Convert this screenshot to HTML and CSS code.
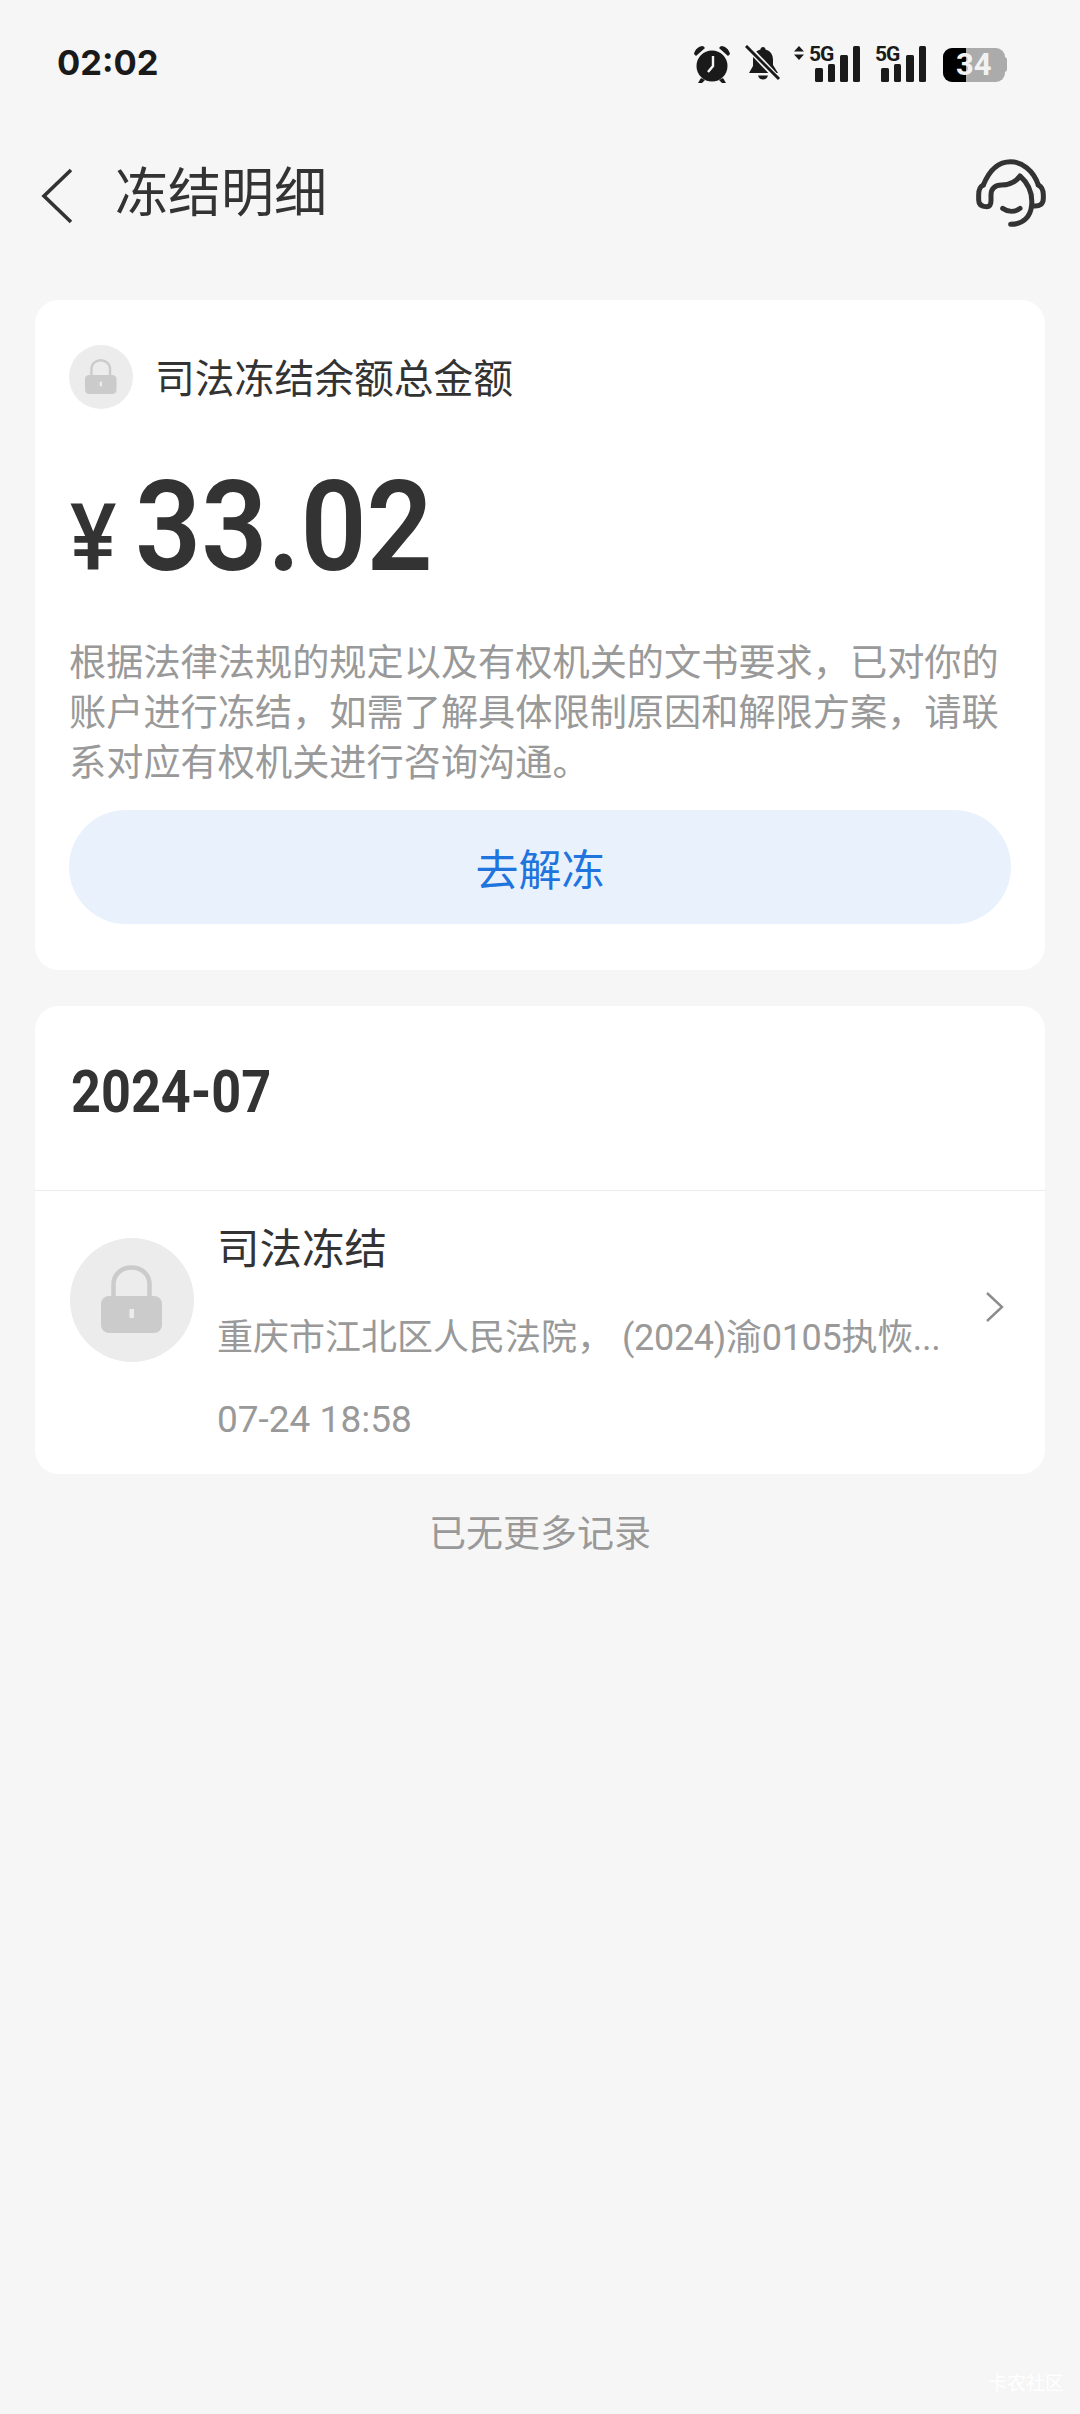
FILE: index.html
```html
<!DOCTYPE html>
<html lang="zh-CN">
<head>
    <meta charset="UTF-8">
    <meta name="viewport" content="width=device-width, initial-scale=1.0">
    <title>冻结明细</title>
    <link rel="stylesheet" href="styles.css">
</head>
<body>
    <svg class="defs" width="0" height="0">
        <symbol id="lock" viewBox="0 0 124 124">
            <path d="M43.5 60V46C43.5 36 52 29.5 61.5 29.5S79.5 36 79.5 46V60" fill="none" stroke="#cbcbcb" stroke-width="4.5"/>
            <rect x="31" y="58" width="61" height="37" rx="8" fill="#cbcbcb"/>
            <rect x="59.5" y="71" width="4.5" height="9" fill="#ececec"/>
        </symbol>
        <symbol id="signal" viewBox="0 0 45 36">
            <rect x="0" y="22" width="8" height="14" rx="1.5"/>
            <rect x="13" y="18" width="7" height="18" rx="1.5"/>
            <rect x="25" y="9" width="8" height="27" rx="1.5"/>
            <rect x="38" y="0" width="7" height="36" rx="1.5"/>
        </symbol>
    </svg>

    <div class="status-bar">
        <span class="clock">02:02</span>
        <div class="status-icons">
            <svg class="ic-alarm" width="38" height="38" viewBox="0 0 38 38">
                <circle cx="19" cy="21" r="15.5" fill="#1a1a1a"/>
                <path d="M1 9C2 4 6 1 10 1L12 3 3 11ZM37 9C36 4 32 1 28 1L26 3 35 11Z" fill="#1a1a1a"/>
                <path d="M8 33 5 38H9L12 35ZM30 33 33 38H29L26 35Z" fill="#1a1a1a"/>
                <path d="M20 11V21L15 27" fill="none" stroke="#f6f6f6" stroke-width="2.4"/>
            </svg>
            <svg class="ic-bell" width="36" height="36" viewBox="0 0 36 36">
                <path d="M18 2C19.500 2 20.500 3 20.500 4.500 26 6 28 10 28 15V20L33 28H4L8 21V15C8 10 10 6 15.500 4.500 15.500 3 16.500 2 18 2Z" fill="#1a1a1a"/>
                <path d="M13 30.500H23C22 33.500 20 34.500 18 34.500S14 33.500 13 30.500Z" fill="#1a1a1a"/>
                <path d="M1 0 34 35" stroke="#f6f6f6" stroke-width="6"/>
                <path d="M1 1 34 34" stroke="#1a1a1a" stroke-width="3"/>
            </svg>
            <svg class="ic-net" width="66" height="44" viewBox="0 -6 66 44">
                <path d="M5 0 10 5.500H0ZM5 14 0 8.500H10Z" fill="#1a1a1a"/>
                <text x="15" y="15" class="net-label">5G</text>
                <use href="#signal" x="21" y="0" width="45" height="36" fill="#1a1a1a"/>
            </svg>
            <svg class="ic-net2" width="51" height="44" viewBox="0 -6 51 44">
                <text x="0" y="15" class="net-label">5G</text>
                <use href="#signal" x="6" y="0" width="45" height="36" fill="#1a1a1a"/>
            </svg>
            <div class="battery">
                <div class="battery-body">
                    <span class="battery-fill"></span>
                </div>
                <span class="battery-num">34</span>
            </div>
        </div>
    </div>

    <header class="nav">
        <svg class="nav-back" width="34" height="56" viewBox="0 0 34 56">
            <path d="M31 2 4 28 31 54" fill="none" stroke="#333" stroke-width="3.6"/>
        </svg>
        <h1 class="nav-title">冻结明细</h1>
        <svg class="nav-service" width="140" height="110" viewBox="0 0 420 330">
            <g fill="none" stroke="#333" stroke-width="15" stroke-linecap="round" stroke-linejoin="round">
                <path d="M130 165C150 115 180 95 212 95S280 120 295 165"/>
                <path d="M130 165C118 170 116 180 116 195V210C116 225 125 230 140 230 150 230 153 222 153 212V195C153 175 165 165 185 165 205 165 225 160 240 138 265 160 278 190 275 225 272 260 250 283 212 283"/>
                <path d="M295 165C305 170 310 180 310 195V205C310 222 300 230 280 228"/>
                <path d="M188 235C205 247 225 247 240 235"/>
            </g>
        </svg>
    </header>

    <main class="content">
        <section class="card summary">
            <div class="summary-head">
                <svg class="lock-small" width="64" height="64"><use href="#lock"/></svg>
                <span class="summary-label">司法冻结余额总金额</span>
            </div>
            <div class="amount">
                <span class="amount-unit">¥</span>
                <span class="amount-value">33.02</span>
            </div>
            <p class="summary-desc">根据法律法规的规定以及有权机关的文书要求，已对你的账户进行冻结，如需了解具体限制原因和解限方案，请联系对应有权机关进行咨询沟通。</p>
            <button class="btn-unfreeze">去解冻</button>
        </section>

        <section class="card records">
            <div class="records-head">
                <h2 class="records-month">2024-07</h2>
            </div>
            <div class="record">
                <svg class="lock-big" width="124" height="124"><use href="#lock"/></svg>
                <div class="record-body">
                    <div class="record-title">司法冻结</div>
                    <div class="record-sub">重庆市江北区人民法院，<span class="case-no">(2024)渝0105执恢...</span></div>
                    <div class="record-time">07-24 18:58</div>
                </div>
                <svg class="record-arrow" width="20" height="32" viewBox="0 0 20 32">
                    <path d="M2 2 17 16 2 30" fill="none" stroke="#8c8c8c" stroke-width="2.4"/>
                </svg>
            </div>
        </section>

        <div class="no-more">已无更多记录</div>
    </main>

    <div class="site-mark">卡农社区</div>
</body>
</html>
```

FILE: styles.css
```css
* {
    box-sizing: border-box;
}

body {
    margin: 0;
    height: 2414px;
    position: relative;
    overflow: hidden;
    background-color: #f6f6f6;
    font-family: Roboto, "Noto Sans CJK SC", sans-serif;
    color: #333;
}

.defs {
    position: absolute;
}

/* status bar */
.status-bar {
    height: 126px;
    padding: 44px 73px 0 57px;
    display: flex;
    justify-content: space-between;
    align-items: flex-start;
}

.clock {
    font-family: Inter, sans-serif;
    font-size: 34.5px;
    font-weight: 700;
    line-height: 38px;
    color: #1a1a1a;
}

.status-icons {
    display: flex;
    align-items: flex-start;
}

.ic-alarm {
    margin-top: 1px;
}

.ic-bell {
    margin-left: 14px;
    margin-top: 1px;
}

.ic-net {
    margin-left: 13px;
    margin-top: -4px;
}

.ic-net2 {
    margin-left: 15px;
    margin-top: -4px;
}

.net-label {
    font-family: Roboto, sans-serif;
    font-size: 21px;
    font-weight: 700;
    letter-spacing: -1px;
    fill: #1a1a1a;
}

.battery {
    position: relative;
    width: 64px;
    height: 34px;
    margin: 4px 0 0 17px;
}

.battery-body {
    position: relative;
    width: 62px;
    height: 34px;
    background-color: #ababab;
    border-radius: 9px;
    overflow: hidden;
}

.battery::after {
    content: "";
    position: absolute;
    right: 0;
    top: 9px;
    width: 3px;
    height: 15px;
    background-color: #ababab;
    border-radius: 0 3px 3px 0;
}

.battery-fill {
    display: block;
    width: 23px;
    height: 100%;
    background-color: #000;
}

.battery-num {
    position: absolute;
    left: 13px;
    top: 0;
    font-size: 31px;
    font-weight: 700;
    line-height: 34px;
    color: #f2f2f2;
}

/* nav */
.nav {
    height: 174px;
    padding: 40px 0 0 40px;
    display: flex;
    align-items: flex-start;
}

.nav-back {
    margin-top: 2px;
}

.nav-title {
    margin: 0 0 0 41px;
    font-size: 53px;
    font-weight: 400;
    line-height: 56px;
    flex: 1;
}

.nav-service {
    margin: -36px 0 0 0;
}

/* cards */
.content {
    padding: 0 35px;
}

.card {
    background-color: #fff;
    border-radius: 24px;
}

.summary {
    height: 670px;
    margin-bottom: 36px;
    padding: 45px 34px 0;
}

.summary-head {
    display: flex;
    align-items: center;
}

.lock-small {
    background-color: #ececec;
    border-radius: 50%;
}

.summary-label {
    margin-left: 22px;
    margin-top: 5px;
    font-size: 39.8px;
    line-height: 59px;
}

.amount {
    margin-top: 53px;
    display: flex;
    align-items: baseline;
    height: 130px;
    line-height: 130px;
}

.amount-unit {
    display: inline-block;
    width: 65px;
    margin-left: 1px;
    font-size: 92px;
    font-weight: 500;
    transform: scaleX(0.95);
    transform-origin: left;
}

/* the digits are narrower than plain Roboto */
.amount-value {
    display: inline-block;
    font-size: 126px;
    font-weight: 600;
    transform: scaleX(0.92);
    transform-origin: left;
}

.summary-desc {
    margin: 46px 0 0;
    width: 942px;
    font-size: 37.2px;
    line-height: 50px;
    color: #999;
}

.btn-unfreeze {
    display: block;
    width: 942px;
    height: 114px;
    margin-top: 22px;
    border: none;
    border-radius: 57px;
    background-color: #e9f1fd;
    color: #1f74dd;
    font-family: inherit;
    font-size: 43px;
}

.records {
    height: 468px;
}

.records-head {
    height: 185px;
    padding: 50px 0 0 36px;
    border-bottom: 1px solid #ececec;
}

.records-month {
    margin: 0;
    font-size: 60px;
    font-weight: 700;
    line-height: 72px;
    transform: scaleX(0.87);
    transform-origin: left;
}

.record {
    padding: 47px 34px 0 35px;
    display: flex;
    align-items: flex-start;
}

.lock-big {
    background-color: #ececec;
    border-radius: 50%;
    flex-shrink: 0;
}

.record-body {
    margin-left: 23px;
    flex: 1;
    min-width: 0;
    margin-top: -20px;
}

.record-title {
    font-size: 42.5px;
    line-height: 64px;
}

.record-sub {
    margin-top: 31px;
    font-size: 36px;
    line-height: 50px;
    color: #999;
    white-space: nowrap;
}

.case-no {
    margin-left: 9px;
    letter-spacing: -0.3px;
}

.record-time {
    margin-top: 32px;
    font-size: 37px;
    line-height: 50px;
    color: #999;
}

.record-arrow {
    margin: 53px 6px 0 0;
}

.no-more {
    margin-top: 36px;
    text-align: center;
    font-size: 37px;
    line-height: 50px;
    color: #999;
}

/* image host mark, bottom right */
.site-mark {
    position: absolute;
    right: 16px;
    bottom: 20px;
    font-size: 19px;
    line-height: 20px;
    color: #fff;
}
```
